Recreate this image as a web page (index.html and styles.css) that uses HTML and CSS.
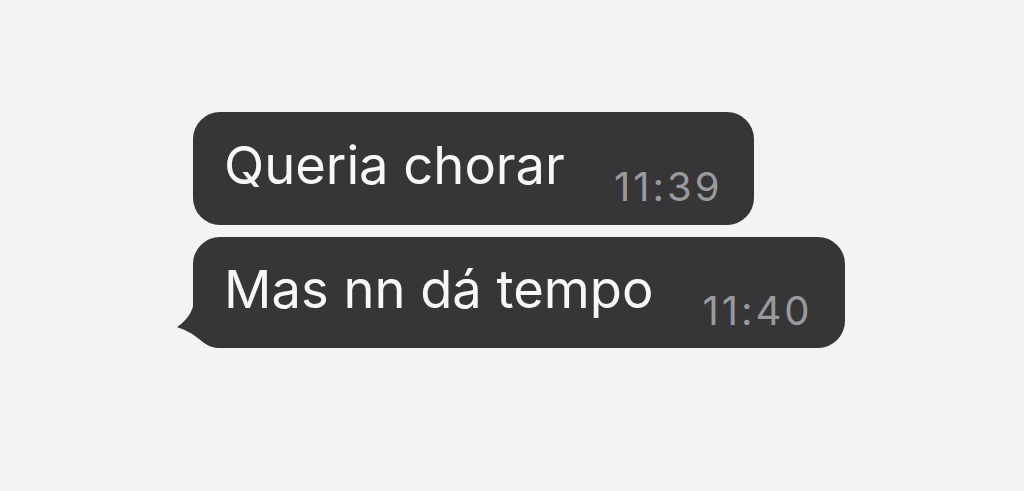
FILE: index.html
```html
<!DOCTYPE html>
<html lang="pt">
<head>
    <meta charset="UTF-8">
    <title>Chat</title>
    <link rel="stylesheet" href="styles.css">
</head>
<body>
    <div class="chat">
        <div class="bubble">
            <span class="text">Queria chorar</span>
            <span class="time">11:39</span>
        </div>
        <div class="bubble last">
            <span class="text">Mas nn dá tempo</span>
            <span class="time">11:40</span>
            <svg class="tail" width="50" height="60" viewBox="0 0 50 60">
                <path d="M21 0 L21 11 C21 24 12 34 4 39 C12 42 19 45 26 51 C32 56 38 60 48 60 L50 60 L50 0 Z" fill="#363638"/>
            </svg>
        </div>
    </div>
</body>
</html>
```

FILE: styles.css
```css
body {
    margin: 0;
    background-color: #f3f3f3;
    font-family: 'Inter', 'Liberation Sans', sans-serif;
}

.chat {
    display: flex;
    flex-direction: column;
    align-items: flex-start;
    gap: 12px;
    padding: 112px 0 0 193px;
}

.bubble {
    position: relative;
    display: flex;
    align-items: flex-end;
    box-sizing: border-box;
    height: 113px;
    padding: 0 32px 18px 31px;
    background-color: #363638;
    border-radius: 27px;
}

.bubble.last {
    height: 111px;
    padding-bottom: 17px;
}

.text {
    color: #f7f7f7;
    font-size: 52.5px;
    line-height: 1;
    padding-bottom: 16px;
}

.time {
    color: #9a9a9c;
    font-size: 40px;
    line-height: 1;
    letter-spacing: 3px;
    margin-left: 49px;
}

.tail {
    position: absolute;
    left: -20px;
    bottom: 0;
}
```
